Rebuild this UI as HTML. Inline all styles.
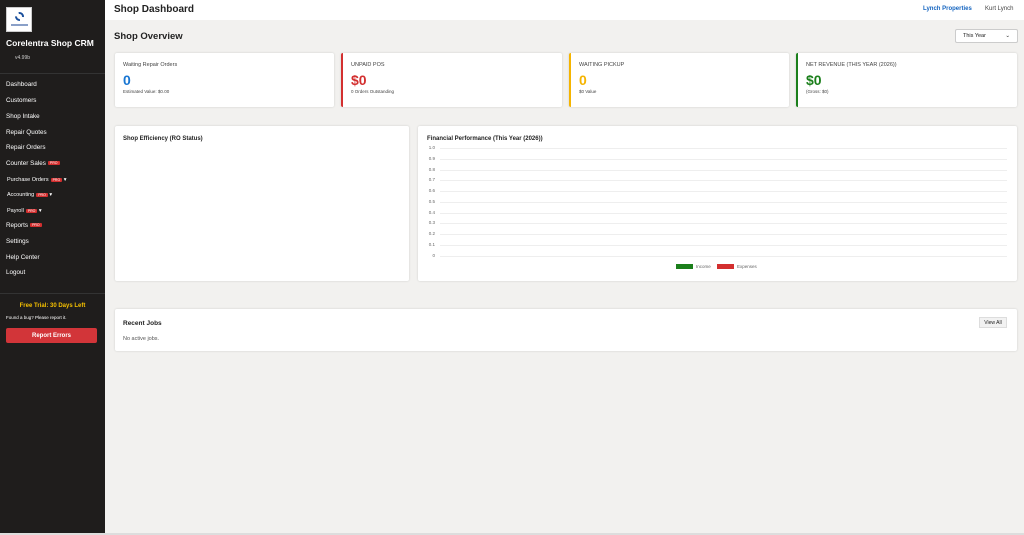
<!DOCTYPE html><html><head><style>
*{box-sizing:border-box;margin:0;padding:0}
body{width:1024px;height:535px;overflow:hidden;font-family:"Liberation Sans",sans-serif;background:#f2f1ef;position:relative;color:#222}
.sb{position:absolute;left:0;top:0;width:105px;height:533px;background:#1f1d1c;color:#fff}
.logo{position:absolute;left:6px;top:7px;width:26px;height:25px;background:#fff;border:1px solid #ccc}
.logo i{position:absolute;left:8px;top:4px;width:9px;height:9px;border-radius:50%;border:2px dashed #1a4f9c}
.logo b{position:absolute;left:4px;top:16px;width:17px;height:2px;background:#8aa0c8}
.nav{position:absolute;left:6px;font-size:6.3px;color:#fff;line-height:8px}
.pro{display:inline-block;background:#d32f2f;color:#fff;font-size:3.5px;line-height:4px;padding:0 2px;border-radius:1px;vertical-align:middle;margin-left:2px}
.a{position:absolute}
.card{position:absolute;background:#fff;box-shadow:0 0 2px rgba(0,0,0,.15);border-radius:2px}
.lbl{position:absolute;left:8px;top:9px;font-size:5.5px;color:#444}
.big{position:absolute;left:8px;top:19px;font-size:14px;font-weight:bold}
.sm{position:absolute;left:8px;top:36px;font-size:4.5px;color:#444}
.gl{position:absolute;left:440px;width:567px;height:1px;background:#eee}
.yl{position:absolute;left:424px;width:11px;text-align:right;font-size:4.5px;color:#666}
</style></head><body>
<div class="sb">
<div class="logo"><i></i><b></b></div>
<div class="a" style="left:6px;top:38px;font-size:8.5px;font-weight:bold">Corelentra Shop CRM</div>
<div class="a" style="left:15px;top:55px;font-size:5px;color:#ccc">v4.99b</div>
<div class="a" style="left:0;top:73px;width:105px;height:1px;background:#333"></div>
<div class="nav" style="top:81px">Dashboard</div>
<div class="nav" style="top:97px">Customers</div>
<div class="nav" style="top:113px">Shop Intake</div>
<div class="nav" style="top:129px">Repair Quotes</div>
<div class="nav" style="top:144px">Repair Orders</div>
<div class="nav" style="top:160px">Counter Sales<span class="pro">PRO</span></div>
<div class="nav" style="top:176px;left:7px;font-size:5.5px">Purchase Orders<span class="pro">PRO</span> ▾</div>
<div class="nav" style="top:191px;left:7px;font-size:5.5px">Accounting<span class="pro">PRO</span> ▾</div>
<div class="nav" style="top:207px;left:7px;font-size:5.5px">Payroll<span class="pro">PRO</span> ▾</div>
<div class="nav" style="top:222px">Reports<span class="pro">PRO</span></div>
<div class="nav" style="top:238px">Settings</div>
<div class="nav" style="top:254px">Help Center</div>
<div class="nav" style="top:269px">Logout</div>
<div class="a" style="left:0;top:293px;width:105px;height:1px;background:#333"></div>
<div class="a" style="left:0;top:303px;width:105px;text-align:center;font-size:6px;font-weight:bold;color:#f5c000">Free Trial: 30 Days Left</div>
<div class="a" style="left:6px;top:315px;font-size:4.5px">Found a bug? Please report it.</div>
<div class="a" style="left:6px;top:328px;width:91px;height:15px;background:#d23539;border-radius:2px;text-align:center;font-size:6px;font-weight:bold;padding-top:4.5px">Report Errors</div>
</div>
<div class="a" style="left:105px;top:0;width:919px;height:20px;background:#fff"></div>
<div class="a" style="left:114px;top:4px;font-size:10px;font-weight:bold">Shop Dashboard</div>
<div class="a" style="left:923px;top:6px;font-size:6px;font-weight:bold;color:#1565c0">Lynch Properties</div>
<div class="a" style="left:985px;top:6px;font-size:6px;color:#444">Kurt Lynch</div>
<div class="a" style="left:114px;top:31px;font-size:9.5px;font-weight:bold">Shop Overview</div>
<div class="a" style="left:955px;top:29px;width:63px;height:14px;background:#fff;border:1px solid #ccc;border-radius:2px;font-size:5.5px;padding:3px 7px">This Year<span style="float:right">⌄</span></div>
<div class="card" style="left:115px;top:53px;width:219px;height:54px"><div class="lbl">Waiting Repair Orders</div><div class="big" style="color:#1976d2">0</div><div class="sm">Estimated Value: $0.00</div></div>
<div class="card" style="left:341px;top:53px;width:221px;height:54px;border-left:2px solid #d32f2f"><div class="lbl">UNPAID POS</div><div class="big" style="color:#d32f2f">$0</div><div class="sm">0 Orders Outstanding</div></div>
<div class="card" style="left:569px;top:53px;width:220px;height:54px;border-left:2px solid #f5b400"><div class="lbl">WAITING PICKUP</div><div class="big" style="color:#f5b400">0</div><div class="sm">$0 Value</div></div>
<div class="card" style="left:796px;top:53px;width:221px;height:54px;border-left:2px solid #1b7f1b"><div class="lbl">NET REVENUE (THIS YEAR (2026))</div><div class="big" style="color:#1b7f1b">$0</div><div class="sm">(Gross: $0)</div></div>
<div class="card" style="left:115px;top:126px;width:294px;height:155px"><div class="a" style="left:8px;top:10px;font-size:6px;font-weight:bold">Shop Efficiency (RO Status)</div></div>
<div class="card" style="left:418px;top:126px;width:599px;height:155px"><div class="a" style="left:9px;top:10px;font-size:6px;font-weight:bold">Financial Performance (This Year (2026))</div></div>
<div class="gl" style="top:148px"></div><div class="yl" style="top:145px">1.0</div>
<div class="gl" style="top:159px"></div><div class="yl" style="top:156px">0.9</div>
<div class="gl" style="top:170px"></div><div class="yl" style="top:167px">0.8</div>
<div class="gl" style="top:180px"></div><div class="yl" style="top:177px">0.7</div>
<div class="gl" style="top:191px"></div><div class="yl" style="top:188px">0.6</div>
<div class="gl" style="top:202px"></div><div class="yl" style="top:199px">0.5</div>
<div class="gl" style="top:213px"></div><div class="yl" style="top:210px">0.4</div>
<div class="gl" style="top:223px"></div><div class="yl" style="top:220px">0.3</div>
<div class="gl" style="top:234px"></div><div class="yl" style="top:231px">0.2</div>
<div class="gl" style="top:245px"></div><div class="yl" style="top:242px">0.1</div>
<div class="gl" style="top:256px"></div><div class="yl" style="top:253px">0</div>
<div class="a" style="left:676px;top:264px;width:17px;height:5px;background:#1b7f1b"></div>
<div class="a" style="left:696px;top:264px;font-size:4.5px;color:#666">Income</div>
<div class="a" style="left:717px;top:264px;width:17px;height:5px;background:#d32f2f"></div>
<div class="a" style="left:737px;top:264px;font-size:4.5px;color:#666">Expenses</div>
<div class="card" style="left:115px;top:309px;width:902px;height:42px"><div class="a" style="left:8px;top:11px;font-size:6.5px;font-weight:bold">Recent Jobs</div><div class="a" style="left:8px;top:27px;font-size:5.5px;color:#555">No active jobs.</div><div class="a" style="left:864px;top:8px;width:28px;height:11px;background:#f2f2f2;border:1px solid #ddd;font-size:5px;text-align:center;padding-top:2px">View All</div></div>
<div class="a" style="left:0;top:533px;width:1024px;height:2px;background:#ddd"></div>
</body></html>
